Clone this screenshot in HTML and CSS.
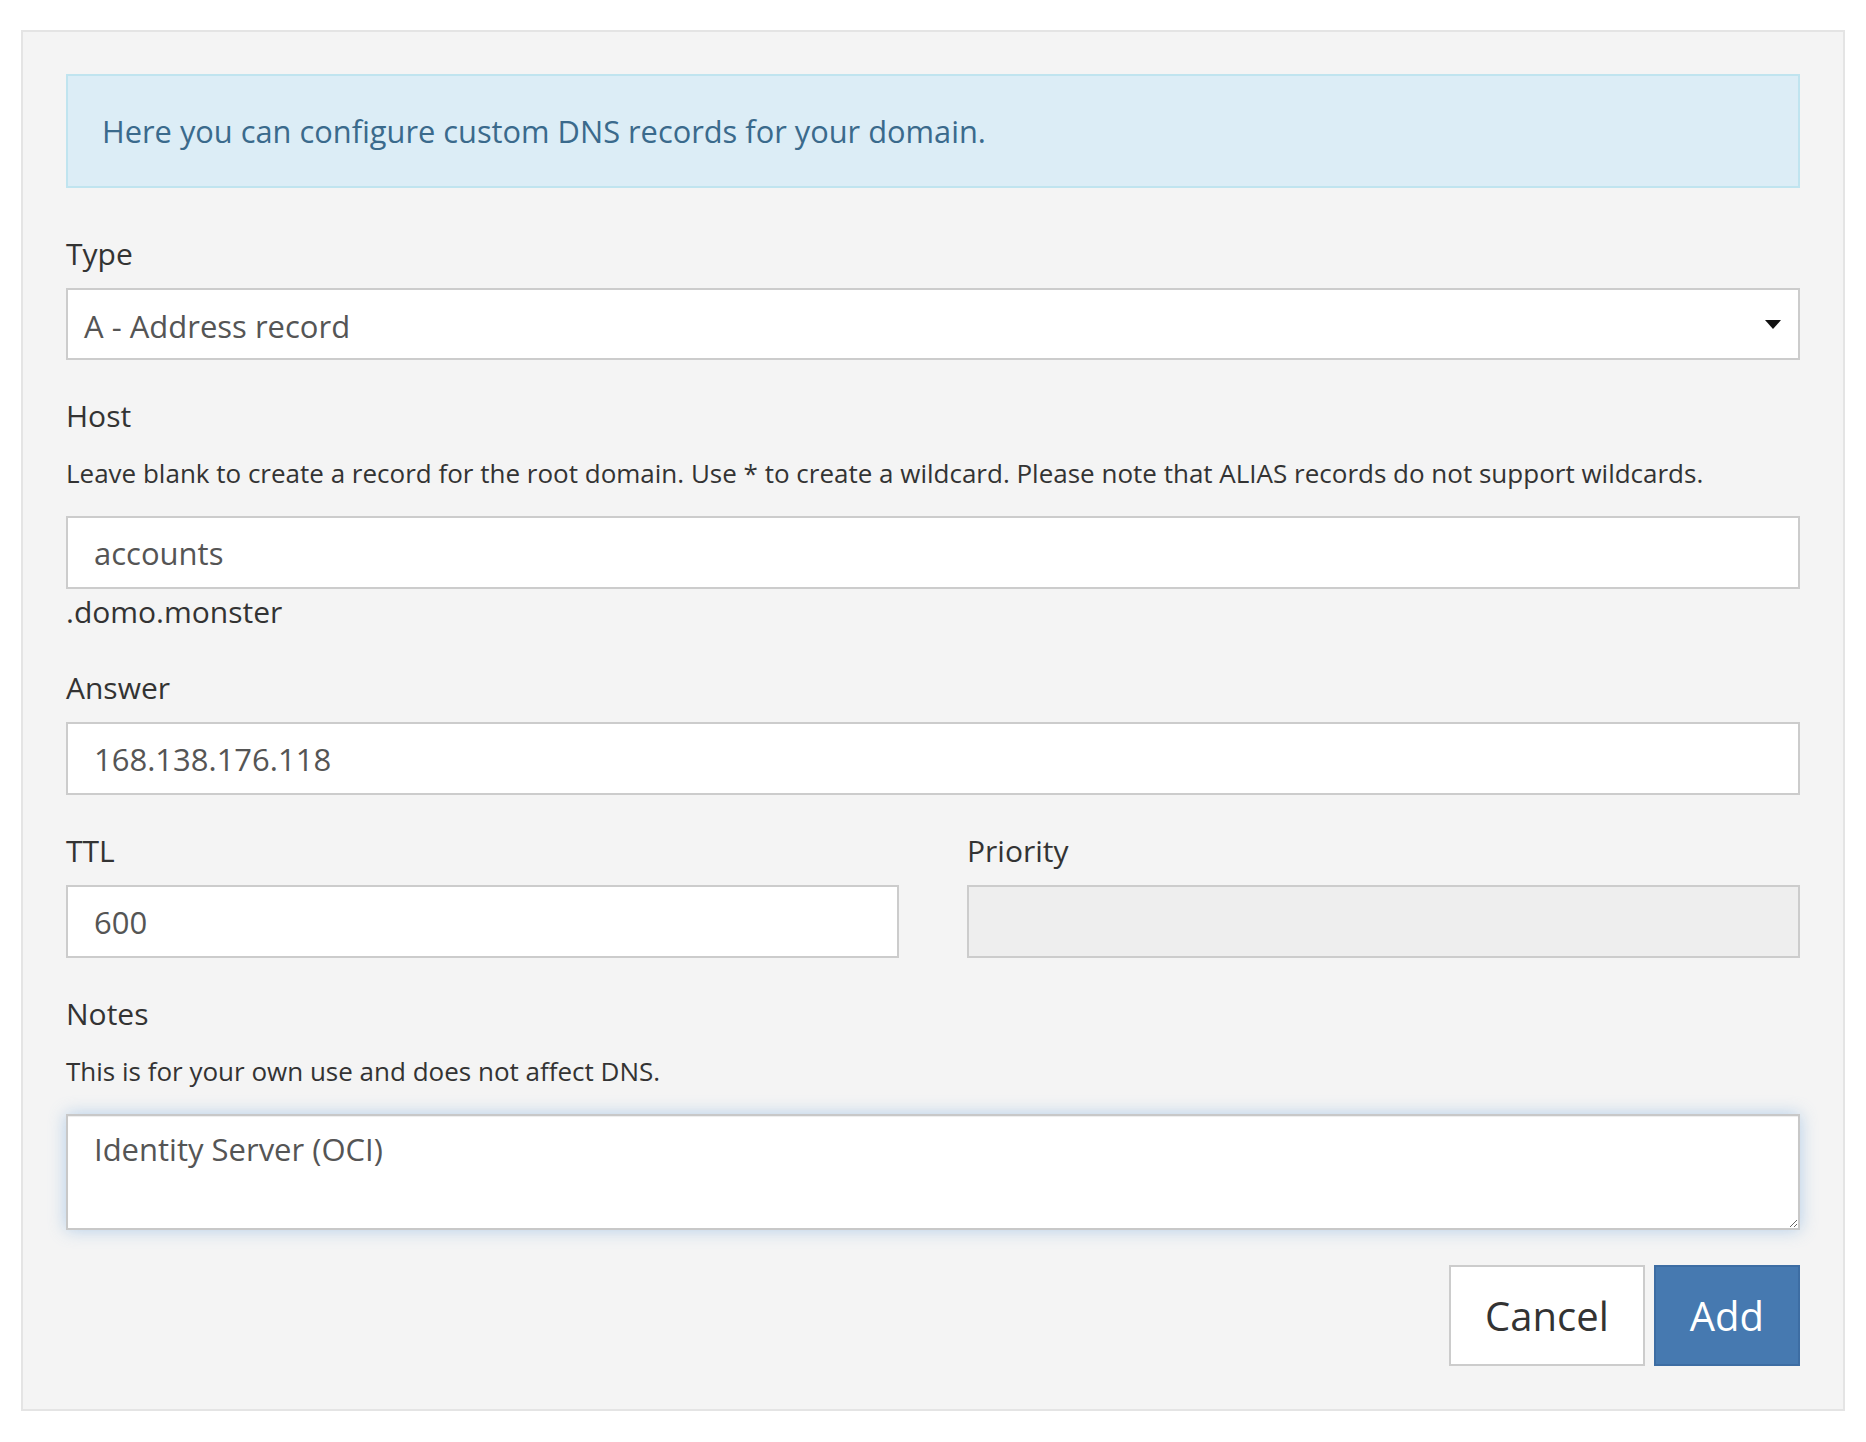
FILE: index.html
```html
<!DOCTYPE html>
<html lang="en">
<head>
<meta charset="utf-8">
<title>Custom DNS record</title>
<link rel="stylesheet" href="styles.css">
</head>
<body>
<div class="panel">
  <div class="alert">Here you can configure custom DNS records for your domain.</div>

  <div class="group">
    <label class="label">Type</label>
    <div class="select">
      <span>A - Address record</span>
      <svg class="caret" width="16" height="9" viewBox="0 0 16 9"><path d="M0 0H16L8 9Z" fill="#111"/></svg>
    </div>
  </div>

  <div class="group">
    <label class="label">Host</label>
    <p class="help">Leave blank to create a record for the root domain. Use * to create a wildcard. Please note that ALIAS records do not support wildcards.</p>
    <input class="input" type="text" value="accounts">
    <div class="suffix">.domo.monster</div>
  </div>

  <div class="group">
    <label class="label">Answer</label>
    <input class="input" type="text" value="168.138.176.118">
  </div>

  <div class="group row">
    <div class="col">
      <label class="label">TTL</label>
      <input class="input" type="text" value="600">
    </div>
    <div class="col">
      <label class="label">Priority</label>
      <input class="input disabled" type="text" value="" disabled>
    </div>
  </div>

  <div class="group last">
    <label class="label">Notes</label>
    <p class="help">This is for your own use and does not affect DNS.</p>
    <textarea class="textarea">Identity Server (OCI)</textarea>
  </div>

  <div class="actions">
    <button class="btn btn-default" type="button">Cancel</button>
    <button class="btn btn-primary" type="button">Add</button>
  </div>
</div>
</body>
</html>
```

FILE: styles.css
```css
* { box-sizing: border-box; }

html, body {
  margin: 0;
  background: #ffffff;
}

body {
  padding: 30px 21px 0 21px;
  font-family: "Open Sans", "Noto Sans", sans-serif;
  color: #333333;
}

.panel {
  background: #f4f4f4;
  border: 2px solid #e4e4e4;
  padding: 42px 43px 43px 43px;
}

.alert {
  background: #dcedf6;
  border: 2px solid #c0e4ef;
  color: #3a6a8c;
  font-size: 30.8px;
  line-height: 42px;
  padding: 34px 34px;
  margin-bottom: 46px;
}

.group {
  margin-bottom: 36px;
}

.group.last {
  margin-bottom: 35px;
}

.label {
  display: block;
  font-size: 30px;
  line-height: 40px;
  color: #333333;
  margin-bottom: 14px;
}

.help {
  font-size: 26px;
  line-height: 34px;
  color: #333333;
  margin: 20px 0 26px 0;
}

.select {
  height: 72px;
  background: #ffffff;
  border: 2px solid #cccccc;
  display: flex;
  align-items: center;
  justify-content: space-between;
  padding: 4px 17px 0 16px;
  font-size: 31px;
  color: #555555;
}

.caret {
  display: block;
  margin-top: -4px;
}

.input {
  display: block;
  width: 100%;
  height: 73px;
  background: #ffffff;
  border: 2px solid #cccccc;
  border-radius: 0;
  padding: 0 26px;
  font-family: "Open Sans", "Noto Sans", sans-serif;
  font-size: 31px;
  color: #555555;
  outline: none;
}

.input.disabled {
  background: #eeeeee;
}

.suffix {
  font-size: 30px;
  line-height: 40px;
  color: #333333;
  margin-top: 3px;
}

.row {
  display: grid;
  grid-template-columns: 1fr 1fr;
  column-gap: 68px;
}

.textarea {
  display: block;
  width: 100%;
  height: 116px;
  background: #ffffff;
  border: 2px solid #c8c8c8;
  border-radius: 0;
  padding: 12px 26px;
  font-family: "Open Sans", "Noto Sans", sans-serif;
  font-size: 31px;
  line-height: 42px;
  color: #555555;
  resize: vertical;
  outline: none;
  box-shadow: inset 0 1px 1px rgba(0, 0, 0, 0.075), 0 0 16px rgba(102, 160, 220, 0.45);
}

.actions {
  display: flex;
  justify-content: flex-end;
  gap: 9px;
}

.btn {
  height: 101px;
  padding: 0 34px;
  font-family: "Open Sans", "Noto Sans", sans-serif;
  font-size: 40px;
  border-radius: 0;
  cursor: pointer;
}

.btn-default {
  background: #ffffff;
  border: 2px solid #cccccc;
  color: #333333;
}

.btn-primary {
  background: #4679b0;
  border: 2px solid #3d6da3;
  color: #ffffff;
}
```
